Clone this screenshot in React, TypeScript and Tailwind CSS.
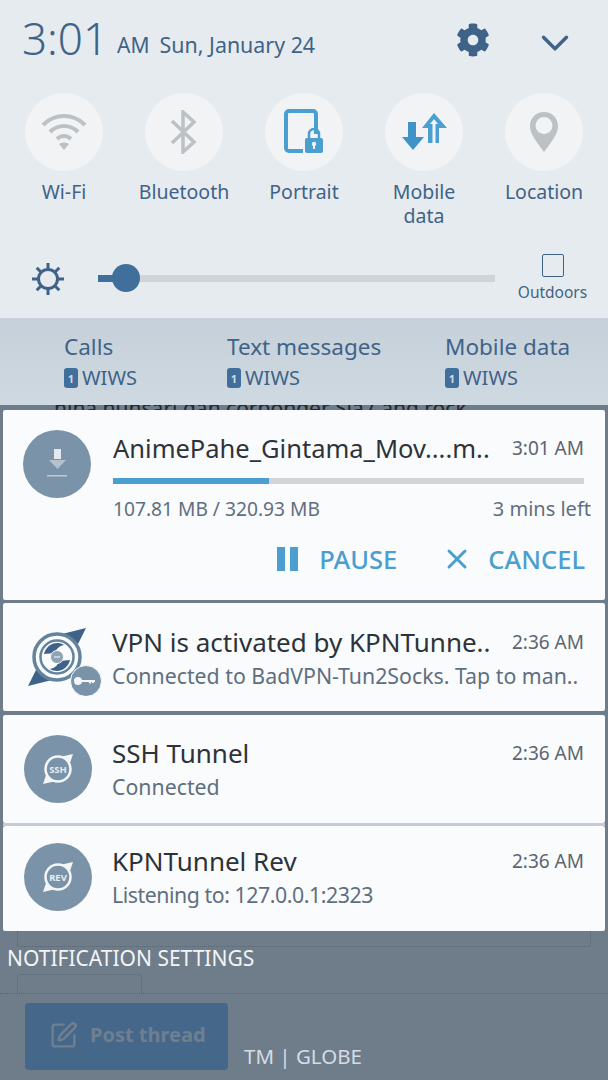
import { FaCog } from "react-icons/fa"
import { ChevronDown, SquarePen, X } from "lucide-react"

function WifiIcon() {
  return (
    <svg width="46" height="40" viewBox="0 0 46 40" fill="none" stroke="#bcc1c5" strokeWidth="4">
      <path d="M2 13C14 1 32 1 44 13" />
      <path d="M9 20C17 12 29 12 37 20" />
      <path d="M16 27C20 23 26 23 30 27" />
      <path d="M23 38l-5-6c3-2 7-2 10 0z" fill="#bcc1c5" stroke="none" />
    </svg>
  )
}

function BluetoothIcon() {
  return (
    <svg width="30" height="44" viewBox="0 0 30 44" fill="none" stroke="#bcc1c5" strokeWidth="3.5">
      <path d="M3 11l22 21-11 10V2l11 10L3 33" />
    </svg>
  )
}

function PortraitIcon() {
  return (
    <svg width="40" height="46" viewBox="0 0 40 46" fill="none">
      <path d="M19 42H5a3 3 0 0 1-3-3V5a3 3 0 0 1 3-3h24a3 3 0 0 1 3 3v20" stroke="#4a9fd0" strokeWidth="4" />
      <rect x="21" y="29" width="18" height="15" rx="2" fill="#4a9fd0" />
      <path d="M25 29v-4a5 5 0 0 1 10 0v4" stroke="#4a9fd0" strokeWidth="2.5" />
      <circle cx="30" cy="35" r="2.2" fill="#f1f3f5" />
      <rect x="29" y="35" width="2" height="5" fill="#f1f3f5" />
    </svg>
  )
}

function MobileDataIcon() {
  return (
    <svg width="46" height="38" viewBox="0 0 46 38">
      <path d="M7 9h8v15h8L12 37 1 24h6z" fill="#3f93c7" />
      <path d="M33 0l13 15h-8v15H27V15h-6z" fill="#4a9fd0" />
      <path d="M33 6l4 5h-2.500v19h-3V11H29z" fill="#f2f3f4" />
    </svg>
  )
}

function LocationIcon() {
  return (
    <svg width="30" height="42" viewBox="0 0 30 42">
      <path d="M15 1C7 1 1 7 1 15c0 9 9 19 14 26 5-7 14-17 14-26C29 7 23 1 15 1z" fill="#bcc1c5" />
      <circle cx="15" cy="14.500" r="8.500" fill="#f2f3f4" />
    </svg>
  )
}

function SunIcon() {
  return (
    <svg width="34" height="34" viewBox="0 0 34 34" fill="none" stroke="#3f6388" strokeWidth="3">
      <circle cx="17" cy="17" r="9.5" />
      <path d="M17 1v6M17 27v6M1 17h6M27 17h6M5.7 5.7l4 4M24.300 24.300l4 4M5.700 28.300l4-4M24.300 9.700l4-4" />
    </svg>
  )
}

function SimBadge() {
  return (
    <span className="flex h-[20px] w-[14px] items-center justify-center rounded-[3px] bg-[#3f6f9a] text-[11px] font-bold leading-none text-[#cfd9e2]">
      1
    </span>
  )
}

function Swirl({ label }: { label: string }) {
  return (
    <svg width="68" height="68" viewBox="0 0 68 68">
      <circle cx="34" cy="34" r="34" fill="#7a93a8" />
      <path d="M49 19L27 24Q38 20 46 28Z" fill="#f3f5f7" />
      <path d="M19 49L41 44Q30 48 22 40Z" fill="#f3f5f7" />
      <circle cx="34" cy="34" r="12.500" fill="#7a93a8" stroke="#f3f5f7" strokeWidth="2.500" />
      <text x="34" y="37.500" textAnchor="middle" fontSize="9.500" fontWeight="700" fill="#e8edf1" fontFamily="Noto Sans, sans-serif">
        {label}
      </text>
    </svg>
  )
}

function VpnLogo() {
  return (
    <svg width="78" height="78" viewBox="0 0 78 78">
      <path d="M62 10L22 20Q40 14 54 26Z" fill="#3f6388" />
      <path d="M4 68L44 58Q26 64 12 52Z" fill="#3f6388" />
      <circle cx="33" cy="39" r="23" fill="#fafbfc" stroke="#64839c" strokeWidth="3.500" />
      <circle cx="33" cy="39" r="16.500" fill="none" stroke="#64839c" strokeWidth="2.500" />
      <path d="M20 36c2-9 12-14 20-9-5 1-8 4-9 8zM46 42c-2 9-12 14-20 9 5-1 8-4 9-8z" fill="#3f6388" />
      <circle cx="33" cy="39" r="6.500" fill="#8ea3b5" stroke="#fafbfc" strokeWidth="1" />
      <path d="M30 39h6" stroke="#fafbfc" strokeWidth="1" />
      <circle cx="62" cy="63" r="15.500" fill="#7a93a8" stroke="#fafbfc" strokeWidth="1" />
      <circle cx="54" cy="63" r="4" fill="#f3f5f7" />
      <path d="M57 63h14M66 63v2.500M69 63v2" stroke="#f3f5f7" strokeWidth="2" />
    </svg>
  )
}

function DownloadGlyph() {
  return (
    <svg width="24" height="32" viewBox="0 0 24 32" fill="#e4e9ed">
      <rect x="9" y="1" width="7" height="10" />
      <path d="M4 12h17l-8.500 9z" opacity="0.550" />
      <rect x="2" y="27" width="20" height="1.500" opacity="0.650" />
    </svg>
  )
}

function Toggle({ icon, label }: { icon: React.ReactNode; label: string }) {
  return (
    <div className="flex w-[120px] flex-col items-center">
      <div className="flex h-[78px] w-[78px] items-center justify-center rounded-full bg-[#f2f3f4]">{icon}</div>
      <div className="mt-[9px] w-[100px] text-center text-[19.500px] leading-[24px] text-[#3f6388]">{label}</div>
    </div>
  )
}

function SimColumn({ title, width }: { title: string; width: string }) {
  return (
    <div className={width}>
      <div className="text-[22.500px] leading-[30px] text-[#3f6388]">{title}</div>
      <div className="mt-[3px] flex items-center gap-[4px] text-[20px] leading-[26px] text-[#3f6388]">
        <SimBadge />
        WIWS
      </div>
    </div>
  )
}

function Notification({
  icon,
  title,
  time,
  sub,
  className,
  textClass,
  subClass = "",
}: {
  icon: React.ReactNode
  title: string
  time: string
  sub: string
  className: string
  textClass: string
  subClass?: string
}) {
  return (
    <div className={`mx-[3px] flex rounded-[2px] bg-[#fafbfc] pl-[21px] pr-[21px] ${className}`}>
      <div className="flex w-[88px] shrink-0 items-center">{icon}</div>
      <div className={`min-w-0 flex-1 ${textClass}`}>
        <div className="flex items-center justify-between">
          <span className="whitespace-nowrap text-[26px] leading-[36px] text-[#2d3339]">{title}</span>
          <span className="whitespace-nowrap text-[19px] leading-[28px] text-[#5a6672]">{time}</span>
        </div>
        <div className={`whitespace-nowrap text-[21.300px] leading-[31px] text-[#5f6f7f] ${subClass}`}>{sub}</div>
      </div>
    </div>
  )
}

export default function App() {
  return (
    <div className="flex h-[1080px] w-[608px] flex-col overflow-hidden bg-[#6f7c89] font-['Noto_Sans','Open_Sans',sans-serif]">
      <div className="h-[318px] bg-[#e6ebef]">
        <div className="flex h-[79px] items-start pl-[22px] pr-[30px] pt-[9px]">
          <span className="text-[44px] font-light leading-[58px] text-[#3f6388]">3:01</span>
          <span className="ml-[9px] mt-[21px] text-[21px] leading-[30px] text-[#3f6388]">AM</span>
          <span className="ml-[10px] mt-[21px] text-[21.400px] leading-[30px] text-[#3f6388]">Sun, January 24</span>
          <FaCog className="ml-auto mt-[14px] text-[#3f6388]" size={34} />
          <ChevronDown className="ml-[42px] mt-[11px] text-[#3f6388]" size={46} strokeWidth={1.800} />
        </div>
        <div className="ml-[4px] mt-[14px] flex h-[145px] items-start">
          <Toggle icon={<WifiIcon />} label="Wi-Fi" />
          <Toggle icon={<BluetoothIcon />} label="Bluetooth" />
          <Toggle icon={<PortraitIcon />} label="Portrait" />
          <Toggle icon={<MobileDataIcon />} label="Mobile data" />
          <Toggle icon={<LocationIcon />} label="Location" />
        </div>
        <div className="flex items-center pl-[31px] pt-[16px]">
          <SunIcon />
          <div className="relative ml-[33px] h-[7px] w-[397px] shrink-0 bg-[#d0d4d8]">
            <div className="h-full w-[28px] bg-[#3f6f9a]" />
            <div className="absolute left-[14px] top-[-11px] h-[28px] w-[28px] rounded-full bg-[#3f6f9a]" />
          </div>
          <div className="ml-[23px] flex w-[69px] flex-col items-center">
            <div className="h-[23px] w-[22px] rounded-[2px] border border-[#3f6388]" />
            <div className="mt-[4px] whitespace-nowrap text-[15.500px] leading-[22px] text-[#3f6388]">Outdoors</div>
          </div>
        </div>
      </div>
      <div className="flex h-[87px] bg-gradient-to-b from-[#c5d0da] to-[#cfd9e1] pl-[64px] pt-[14px]">
        <SimColumn title="Calls" width="w-[163px]" />
        <SimColumn title="Text messages" width="w-[218px]" />
        <SimColumn title="Mobile data" width="w-[130px]" />
      </div>
      <div className="h-[5px] overflow-hidden pl-[54px]">
        <div className="-mt-[10px] whitespace-nowrap text-[21px] leading-[26px] text-[#22282e]">
          nina nunsari dan corbonder Sia7 and rock
        </div>
      </div>

      <div className="mx-[3px] h-[190px] rounded-[2px] bg-[#fafbfc] pl-[20px] pr-[14px] pt-[20px]">
        <div className="flex">
          <div className="flex h-[68px] w-[68px] shrink-0 items-center justify-center rounded-full bg-[#7a93a8]">
            <DownloadGlyph />
          </div>
          <div className="ml-[22px] min-w-0 flex-1">
            <div className="flex items-center justify-between pr-[7px]">
              <span className="whitespace-nowrap text-[25.500px] leading-[36px] text-[#2d3339]">AnimePahe_Gintama_Mov....m..</span>
              <span className="whitespace-nowrap text-[19px] leading-[36px] text-[#5a6672]">3:01 AM</span>
            </div>
            <div className="mr-[7px] mt-[12px] h-[6px] bg-[#d2d5d8]">
              <div className="h-full w-[156px] bg-[#4a9fd0]" />
            </div>
            <div className="mt-[10px] flex items-center justify-between">
              <span className="text-[19.200px] leading-[30px] text-[#5f6f7f]">107.81 MB / 320.93 MB</span>
              <span className="text-[20px] leading-[30px] text-[#5f6f7f]">3 mins left</span>
            </div>
          </div>
        </div>
        <div className="mt-[17px] flex items-center justify-end pr-[6px] text-[25.500px] font-medium leading-[36px] text-[#4a9fd0]">
          <span className="flex gap-[5px]">
            <span className="h-[24px] w-[8px] bg-[#4a9fd0]" />
            <span className="h-[24px] w-[8px] bg-[#4a9fd0]" />
          </span>
          <span className="ml-[21px]">PAUSE</span>
          <X className="ml-[44px]" size={32} strokeWidth={2.200} />
          <span className="ml-[15px]">CANCEL</span>
        </div>
      </div>

      <Notification
        className="mt-[3px] h-[108px]"
        textClass="pt-[21px]"
        icon={<VpnLogo />}
        title="VPN is activated by KPNTunne.."
        time="2:36 AM"
        sub="Connected to BadVPN-Tun2Socks. Tap to man.."
      />
      <Notification
        className="mt-[4px] h-[108px]"
        textClass="pt-[20px]"
        icon={<Swirl label="SSH" />}
        title="SSH Tunnel"
        time="2:36 AM"
        sub="Connected"
      />
      <div className="mx-[3px] h-[3px] bg-[#c3ccd4]" />
      <Notification
        className="h-[105px] pb-[3px]"
        textClass="pt-[17px]"
        icon={<Swirl label="REV" />}
        title="KPNTunnel Rev"
        time="2:36 AM"
        sub="Listening to: 127.0.0.1:2323"
        subClass="tracking-[-0.450px]"
      />

      <div className="mx-[17px] h-[16px] rounded-b-[4px] border-x border-b border-dotted border-[#5b6774]" />
      <div className="-mt-[2px] pl-[7px] text-[21px] leading-[26px] text-[#f2f5f7]">NOTIFICATION SETTINGS</div>
      <div className="mt-[3px] border-b border-dotted border-[#5b6774] pl-[17px]">
        <div className="h-[19px] w-[125px] rounded-t-[4px] border-x border-t border-dotted border-[#5b6774]" />
      </div>
      <div className="mt-[9px] flex items-end pl-[25px]">
        <div className="flex h-[67px] w-[203px] items-start gap-[12px] rounded-[4px] bg-[#45678a] pl-[24px] pt-[18px] text-[#6f7f90]">
          <SquarePen size={29} strokeWidth={2} />
          <span className="text-[20px] font-bold leading-[28px]">Post thread</span>
        </div>
        <span className="ml-[16px] text-[20.500px] leading-[28px] text-[#d5dde5]">TM | GLOBE</span>
      </div>
    </div>
  )
}
